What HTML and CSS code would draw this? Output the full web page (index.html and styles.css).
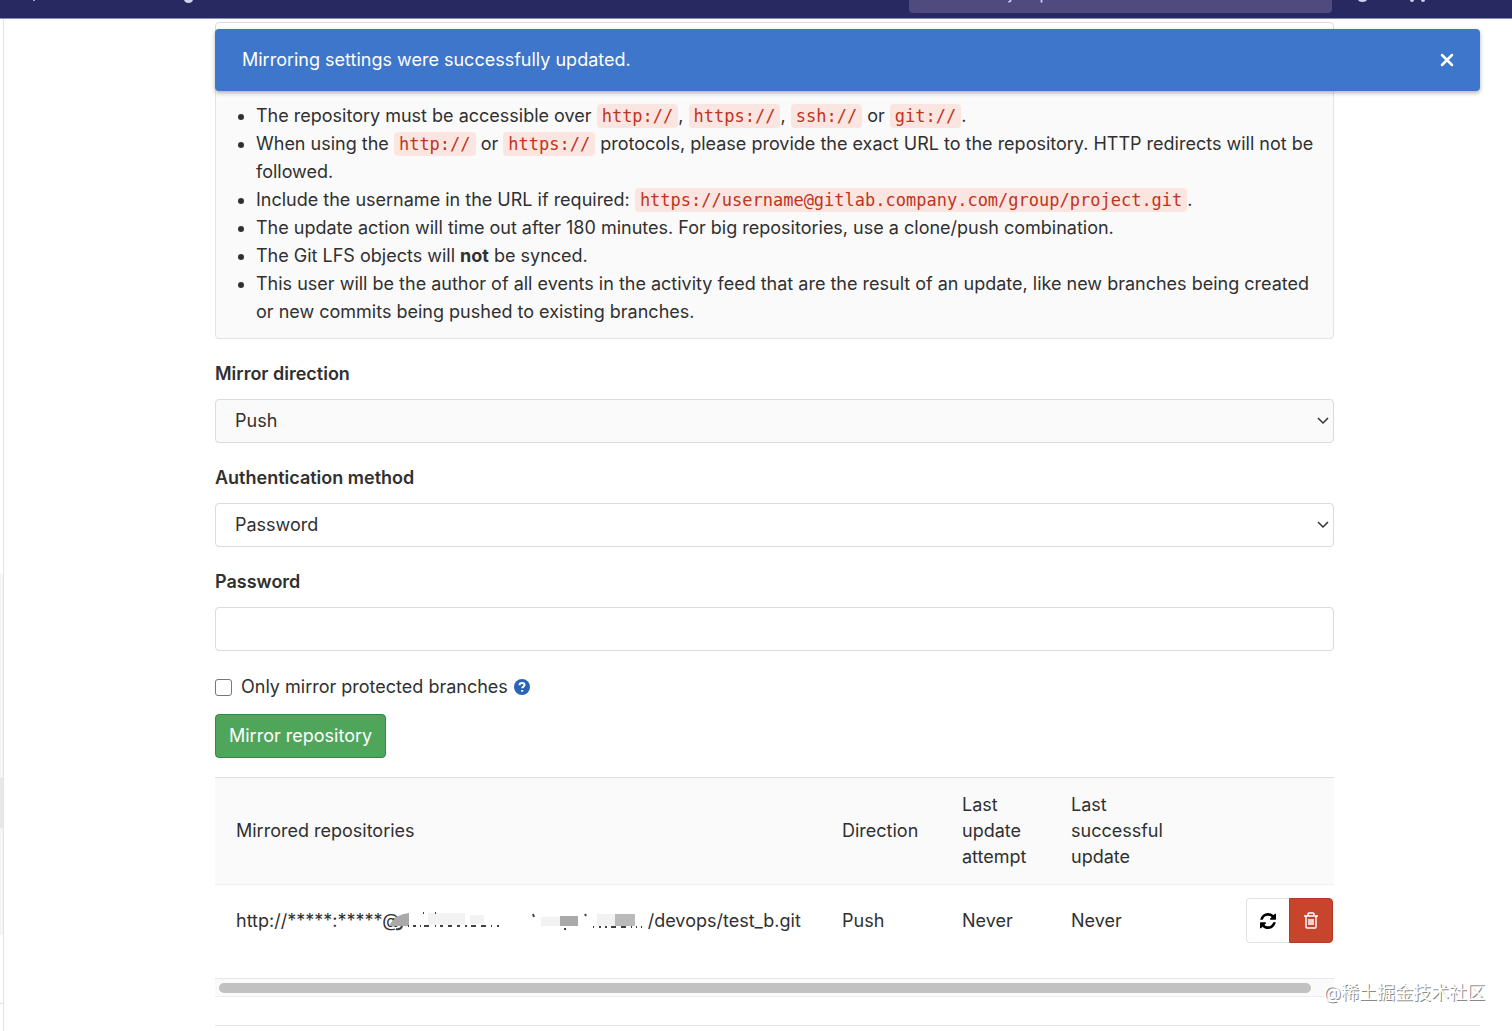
FILE: index.html
```html
<!DOCTYPE html>
<html lang="en">
<head>
    <meta charset="UTF-8">
    <meta name="viewport" content="width=device-width, initial-scale=1.0">
    <title>Mirroring repositories</title>
    <link rel="stylesheet" href="styles.css">
</head>
<body>
    <header class="navbar">
        <svg class="navbar-left" width="200" height="18" viewBox="0 0 200 18" aria-hidden="true">
            <circle cx="34" cy="0" r="1"/>
            <path d="M184 0h9q-1 3-4.500 3T184 0z"/>
        </svg>
        <input class="navbar-search" type="text" placeholder="Search or jump to…" aria-label="Search or jump to">
        <svg class="navbar-right" width="180" height="18" viewBox="0 0 180 18" aria-hidden="true">
            <path d="M26 0h9q-1 2-4.500 2T26 0z"/>
            <circle cx="80" cy="0" r="2"/>
            <circle cx="91" cy="0" r="2"/>
        </svg>
    </header>

    <div class="flash" role="alert">
        <span>Mirroring settings were successfully updated.</span>
        <button class="flash-close" type="button" aria-label="Dismiss">
            <svg width="16" height="16" viewBox="0 0 16 16"><path d="M3 3l10 10M13 3L3 13"/></svg>
        </button>
    </div>

    <div class="layout">
        <aside class="sidebar">
            <div class="sidebar-menu">
                <div class="sidebar-item"></div>
            </div>
            <div class="sidebar-toggle"></div>
        </aside>

        <main class="content">
            <section class="settings">
                <form>
                    <div class="form-group">
                        <input class="form-control" type="text" aria-label="Git repository URL">
                    </div>

                    <div class="well">
                        <ul>
                            <li>The repository must be accessible over <code>http://</code>, <code>https://</code>, <code>ssh://</code> or <code>git://</code>.</li>
                            <li>When using the <code>http://</code> or <code>https://</code> protocols, please provide the exact URL to the repository. HTTP redirects will not be followed.</li>
                            <li>Include the username in the URL if required: <code>https://username@gitlab.company.com/group/project.git</code>.</li>
                            <li>The update action will time out after 180 minutes. For big repositories, use a clone/push combination.</li>
                            <li>The Git LFS objects will <strong>not</strong> be synced.</li>
                            <li>This user will be the author of all events in the activity feed that are the result of an update, like new branches being created or new commits being pushed to existing branches.</li>
                        </ul>
                    </div>

                    <div class="form-group">
                        <label for="direction">Mirror direction</label>
                        <div class="select-wrapper">
                            <select class="form-control disabled" id="direction">
                                <option>Push</option>
                            </select>
                            <svg class="chevron" width="12" height="8" viewBox="0 0 12 8"><path d="M1 1l5 5 5-5"/></svg>
                        </div>
                    </div>

                    <div class="form-group">
                        <label for="auth">Authentication method</label>
                        <div class="select-wrapper">
                            <select class="form-control" id="auth">
                                <option>Password</option>
                            </select>
                            <svg class="chevron" width="12" height="8" viewBox="0 0 12 8"><path d="M1 1l5 5 5-5"/></svg>
                        </div>
                    </div>

                    <div class="form-group">
                        <label for="password">Password</label>
                        <input class="form-control" type="password" id="password">
                    </div>

                    <div class="form-check">
                        <input type="checkbox" id="protected">
                        <label for="protected">Only mirror protected branches</label>
                        <a href="#" class="help" aria-label="Help">
                            <svg width="16" height="16" viewBox="0 0 16 16">
                                <circle cx="8" cy="8" r="8"/>
                                <path d="M5.500 6.200C5.600 4.600 6.600 3.900 8 3.900c1.500 0 2.500.8 2.500 2 0 1.700-2.300 1.700-2.300 3.400M8.200 10.900v1.900"/>
                            </svg>
                        </a>
                    </div>

                    <button class="btn-success" type="button">Mirror repository</button>
                </form>

                <table class="mirrors">
                    <colgroup>
                        <col>
                        <col class="col-direction">
                        <col class="col-attempt">
                        <col class="col-update">
                        <col class="col-actions">
                    </colgroup>
                    <thead>
                        <tr>
                            <th>Mirrored repositories</th>
                            <th>Direction</th>
                            <th>Last update attempt</th>
                            <th>Last successful update</th>
                            <th></th>
                        </tr>
                    </thead>
                    <tbody>
                        <tr>
                            <td>
                                <div class="mirror-url">
                                    <span>http://*****:*****@</span>
                                    <!-- host name is blanked out -->
                                    <svg class="redacted" width="262" height="24" viewBox="0 0 262 24" aria-hidden="true">
                                        <path class="mosaic-dark" d="M3 17Q9 5 23 4v13z"/>
                                        <path class="mosaic-light" d="M42 4h37v12H42zM84 6h14v9H84zM155 8h19v9h-19zM211 5h18v12h-18z"/>
                                        <path class="mosaic-dark" d="M174 7h18v10h-18z"/>
                                        <path class="mosaic-mid" d="M229 5h20v12h-20z"/>
                                        <path class="remnant" d="M10 20q5 1 6-3M22 17h1M27 17h3M34 17h1M38 17h5M49 17h1M54 17h3M62 17h4M71 17h3M79 17h2M85 17h5M95 17h5M105 17h1M111 17h2M37 4h1M49 4h1M147 5l1 3M178 20h2M199 5l1 2M207 18h1M213 18h2M219 18h2M225 18h5M235 18h5M245 18h1M250 18h1M255 18h1"/>
                                    </svg>
                                    <span>/devops/test_b.git</span>
                                </div>
                            </td>
                            <td>Push</td>
                            <td>Never</td>
                            <td>Never</td>
                            <td>
                                <div class="btn-group">
                                    <button class="btn-refresh" type="button" aria-label="Update now">
                                        <svg width="16" height="16" viewBox="0 0 1536 1536"><path d="M1511 928q0 5-1 7-64 268-268 434.500T764 1536q-146 0-282.500-55T238 1324l-129 129q-19 19-45 19t-45-19-19-45V960q0-26 19-45t45-19h448q26 0 45 19t19 45-19 45l-137 137q71 66 161 102t187 36q134 0 250-65t186-179q11-17 53-117 8-23 30-23h192q13 0 22.500 9.500t9.500 22.500zm25-800v448q0 26-19 45t-45 19h-448q-26 0-45-19t-19-45 19-45l138-138Q969 256 768 256q-134 0-250 65T332 500q-11 17-53 117-8 23-30 23H50q-13 0-22.500-9.500T18 608v-7q65-268 270-434.500T768 0q146 0 284 55.500T1297 212l130-129q19-19 45-19t45 19 19 45z"/></svg>
                                    </button>
                                    <button class="btn-delete" type="button" aria-label="Remove">
                                        <svg width="16" height="18" viewBox="0 0 16 18"><path d="M1 4h14M5 4V2q0-1 1-1h4q1 0 1 1v2M3 4v11q0 1 1 1h8q1 0 1-1V4M6 7v6M8 7v6M10 7v6"/></svg>
                                    </button>
                                </div>
                            </td>
                        </tr>
                    </tbody>
                </table>
                <div class="scrollbar"><div class="scrollbar-thumb"></div></div>
            </section>
        </main>
    </div>

    <div class="watermark">@稀土掘金技术社区</div>
</body>
</html>
```
FILE: styles.css
```css
* {
    box-sizing: border-box;
}
body {
    margin: 0;
    height: 100vh;
    overflow: hidden;
    font-family: Inter, "Noto Sans CJK SC", sans-serif;
    font-size: 18px;
    line-height: 28px;
    color: #303030;
    background-color: #fff;
}
input, select, button {
    font: inherit;
    color: inherit;
}
.navbar {
    display: flex;
    align-items: flex-end;
    height: 19px;
    overflow: hidden;
    background-color: #292961;
    border-bottom: 1px solid #8a8ab4;
}
.navbar svg {
    fill: #d1d1f0;
}
.navbar-left {
    margin-right: auto;
}
.navbar-search {
    width: 423px;
    height: 42px;
    margin-bottom: 5px;
    padding: 0 12px;
    border: none;
    border-radius: 4px;
    background-color: #4f4b7e;
}
.navbar-search::placeholder {
    color: #d1d1f0;
}
.flash {
    position: absolute;
    top: 29px;
    left: 215px;
    right: 32px;
    height: 62px;
    padding: 0 25px 0 27px;
    display: flex;
    align-items: center;
    justify-content: space-between;
    color: #fff;
    background-color: #3d76cb;
    border-radius: 4px;
    box-shadow: 0 2px 4px rgba(0,0,0,0.3);
}
.flash-close {
    display: flex;
    padding: 0;
    border: none;
    background: none;
    cursor: pointer;
}
.flash-close svg {
    fill: none;
    stroke: #fff;
    stroke-width: 2.5;
    stroke-linecap: round;
}
.layout {
    display: grid;
    grid-template-columns: 4px 1fr;
}
.sidebar {
    padding-top: 555px;
    border-right: 1px solid #e3e3e3;
}
.sidebar-menu {
    height: 361px;
    padding-top: 204px;
    background-color: #f5f5f5;
}
.sidebar-item {
    height: 50px;
    background-color: #e8e8e8;
}
.sidebar-toggle {
    margin-top: 68px;
    height: 40px;
    border-top: 1px solid #e3e3e3;
}
.content {
    padding: 3px 32px 0 211px;
}
.settings {
    padding: 0 146px 28px 0;
    border-bottom: 1px solid #e3e3e3;
}
.form-group {
    margin-bottom: 21px;
}
.form-group label {
    display: block;
    margin-bottom: 11px;
    font-weight: 600;
}
.form-control {
    display: block;
    width: 100%;
    height: 44px;
    padding: 0 19px;
    border: 1px solid #dbdbdb;
    border-radius: 4px;
    background-color: #fff;
    appearance: none;
}
.form-control.disabled {
    background-color: #fafafa;
}
.select-wrapper {
    position: relative;
}
.chevron {
    position: absolute;
    right: 5px;
    top: 18px;
    fill: none;
    stroke: #303030;
    stroke-width: 1.5;
    pointer-events: none;
}
.well {
    margin-bottom: 21px;
    padding: 14px 16px 12px;
    border: 1px solid #e3e3e3;
    border-radius: 4px;
    background-color: #fafafa;
}
.well ul {
    margin: 0;
    padding-left: 24px;
}
code {
    padding: 2px 5px;
    font-family: "DejaVu Sans Mono", monospace;
    font-size: 17px;
    line-height: 20px;
    color: #c0341d;
    background-color: #fbe5e1;
    border-radius: 4px;
}
.form-check {
    display: flex;
    align-items: center;
    height: 30px;
    margin-bottom: 12px;
}
.form-check input {
    appearance: none;
    width: 17px;
    height: 17px;
    margin: 0 9px 0 0;
    border: 1px solid #767676;
    border-radius: 3px;
}
.help {
    display: flex;
    margin-left: 6px;
}
.help circle {
    fill: #2a65b5;
}
.help path {
    fill: none;
    stroke: #fff;
    stroke-width: 2;
}
.btn-success {
    display: block;
    height: 44px;
    padding: 0 13px;
    color: #fff;
    background-color: #4fa65b;
    border: 1px solid #2f8a45;
    border-radius: 4px;
    cursor: pointer;
}
.mirrors {
    width: 100%;
    margin-top: 19px;
    table-layout: fixed;
    border-collapse: collapse;
}
.col-direction {
    width: 120px;
}
.col-attempt {
    width: 109px;
}
.col-update {
    width: 134px;
}
.col-actions {
    width: 150px;
}
.mirrors th {
    padding: 14px 20px 14px 21px;
    font-weight: 400;
    line-height: 26px;
    text-align: left;
    background-color: #fafafa;
    border-top: 1px solid #dfdfdf;
    border-bottom: 1px solid #f0f0f0;
}
.mirrors td {
    padding: 13px 20px 35px 21px;
    line-height: 44px;
}
.mirrors td:last-child {
    padding-right: 1px;
}
.mirror-url {
    display: flex;
    align-items: center;
    white-space: nowrap;
}
.redacted {
    flex: none;
    margin-left: -14px;
}
.mosaic-dark {
    fill: #a9a9a9;
}
.mosaic-mid {
    fill: #bababa;
}
.mosaic-light {
    fill: #f2f2f2;
}
.remnant {
    fill: none;
    stroke: #404040;
    stroke-width: 2;
}
.btn-group {
    display: flex;
    justify-content: flex-end;
}
.btn-group button {
    display: flex;
    align-items: center;
    justify-content: center;
    height: 45px;
    padding: 0;
    cursor: pointer;
}
.btn-group .btn-refresh {
    width: 43px;
    background-color: #fff;
    border: 1px solid #e3e3e3;
    border-right: none;
    border-radius: 4px 0 0 4px;
}
.btn-group .btn-delete {
    width: 44px;
    background-color: #c9442c;
    border: 1px solid #b53a24;
    border-radius: 0 4px 4px 0;
}
.btn-delete path {
    fill: none;
    stroke: #fff;
    stroke-width: 1.5;
}
.scrollbar {
    height: 19px;
    padding: 4px 23px 4px 4px;
    background-color: #fafafa;
    border-top: 1px solid #e8e8e8;
    border-bottom: 1px solid #ededed;
}
.scrollbar-thumb {
    height: 10px;
    border-radius: 5px;
    background-color: #c1c1c1;
}
.watermark {
    position: absolute;
    right: 27px;
    bottom: 24px;
    color: #fff;
    text-shadow: 1px 1px 0 #8a8a8a;
}
```
